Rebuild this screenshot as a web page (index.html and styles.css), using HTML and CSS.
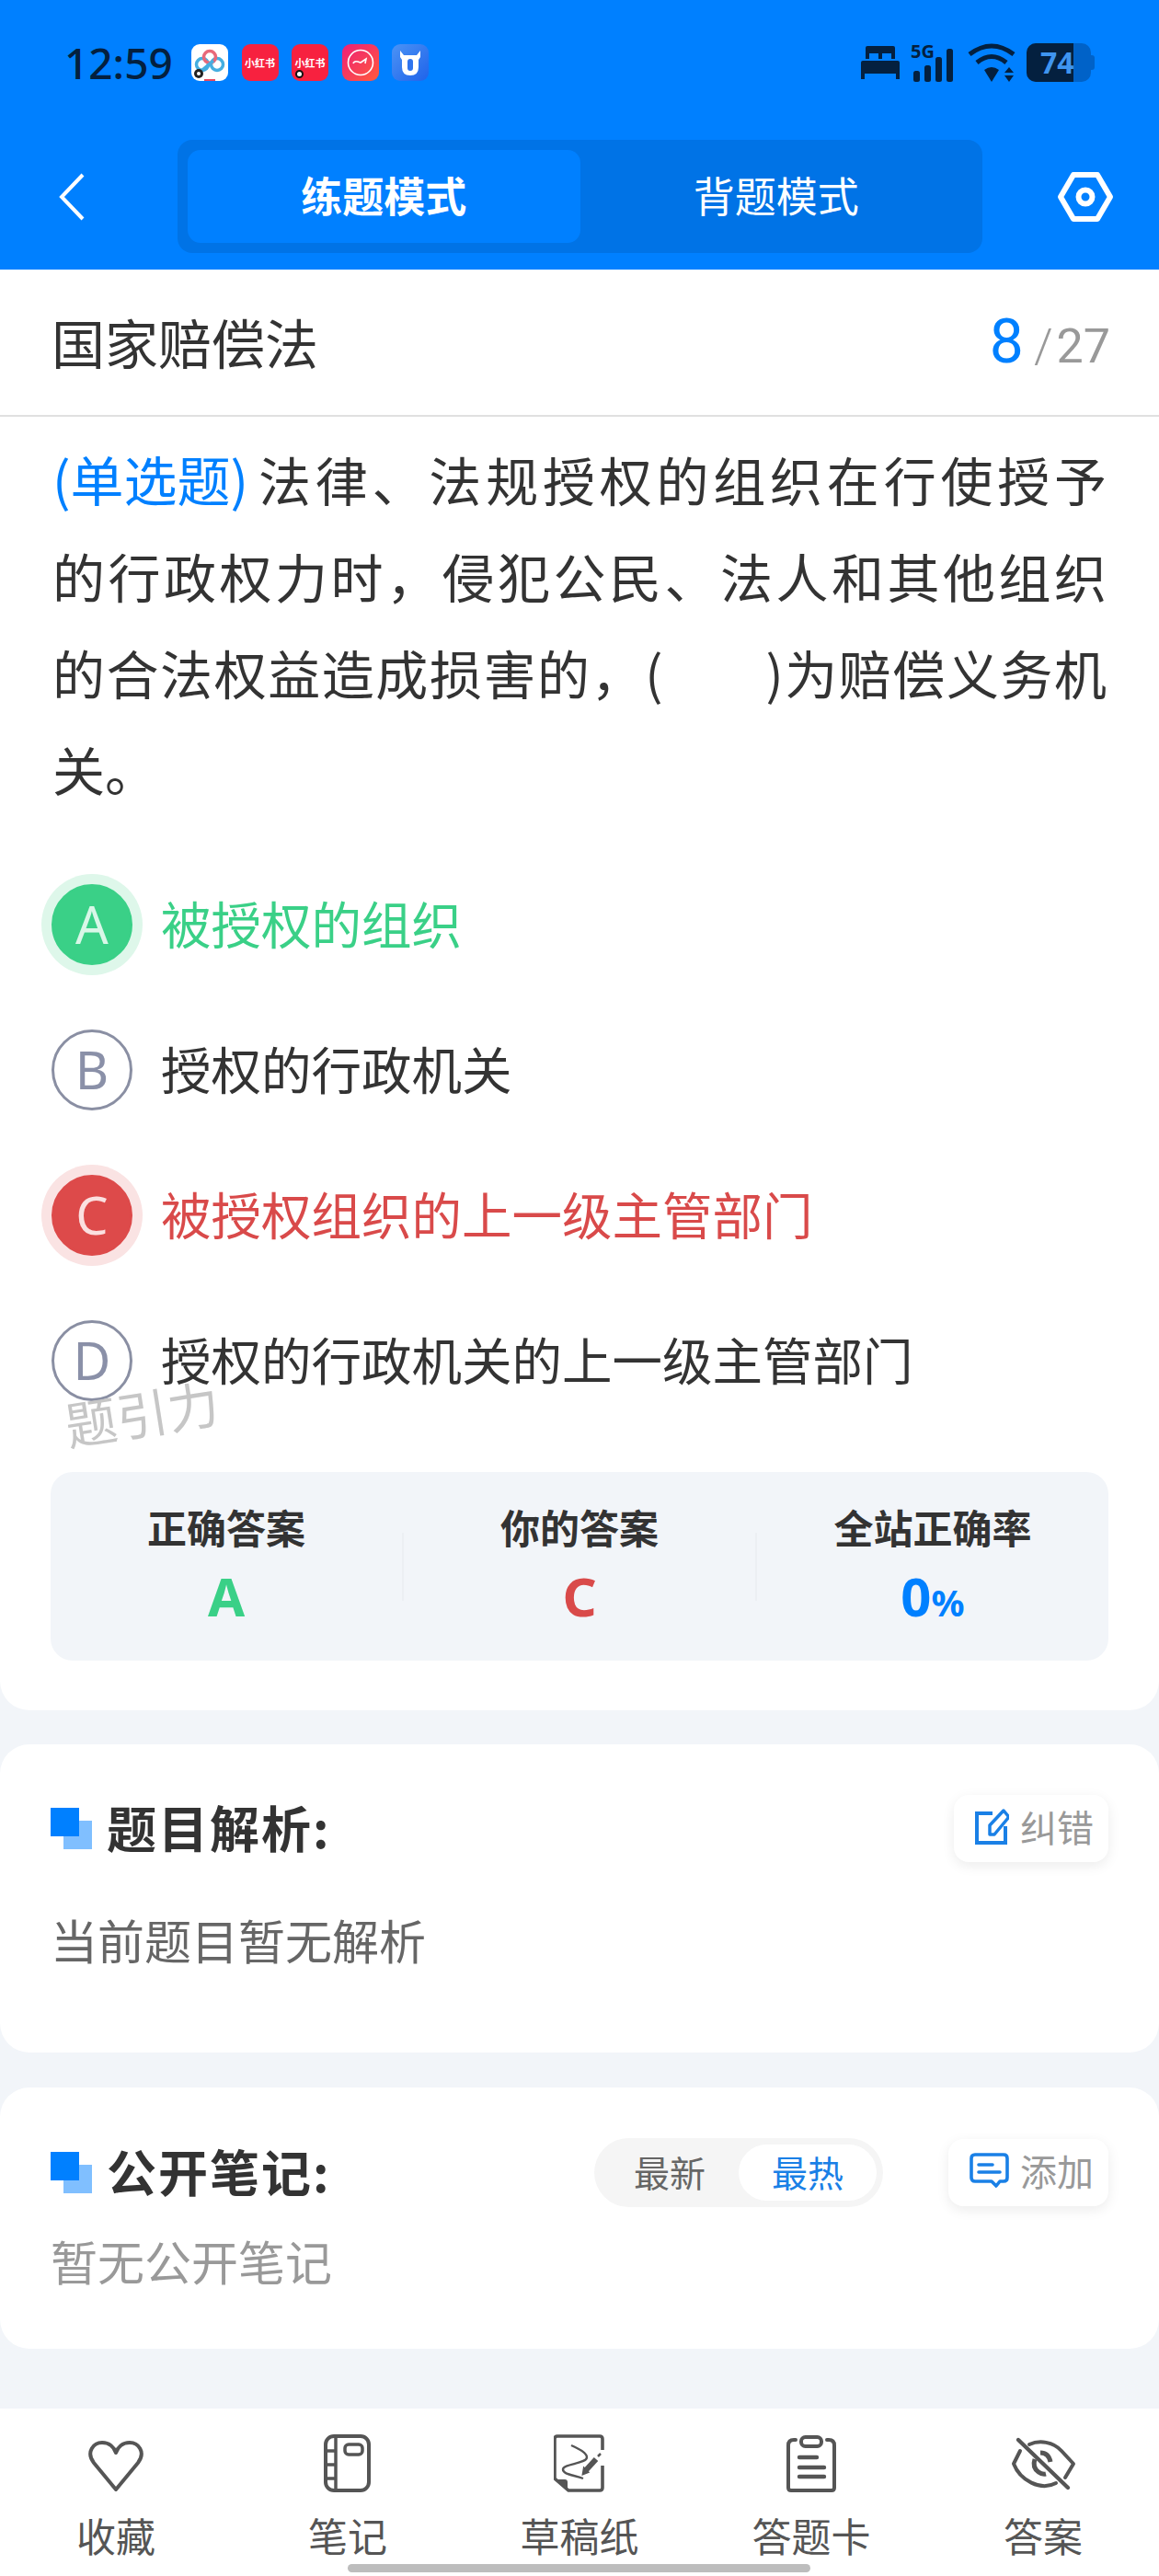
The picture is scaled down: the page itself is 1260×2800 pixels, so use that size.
FILE: index.html
```html
<!DOCTYPE html>
<html lang="zh-CN">
<head>
    <meta charset="UTF-8">
    <meta name="viewport" content="width=device-width, initial-scale=1.0">
    <title>练题模式</title>
    <link rel="stylesheet" href="styles.css">
</head>
<body>
<div class="app">

    <header class="top">
        <div class="status">
            <span class="time">12:59</span>
            <div class="notif">
                <svg class="app-icon" viewBox="0 0 40 40">
                    <rect width="40" height="40" rx="9" fill="#fff"/>
                    <circle cx="12" cy="22" r="6.5" fill="none" stroke="#45aee0" stroke-width="3.5"/>
                    <circle cx="28" cy="22" r="6.5" fill="none" stroke="#45aee0" stroke-width="3.5"/>
                    <circle cx="20" cy="14" r="6.5" fill="none" stroke="#e8697a" stroke-width="3.5"/>
                    <path d="M12 28L24 18" stroke="#45aee0" stroke-width="3.5"/>
                    <circle cx="8" cy="32" r="5" fill="#222"/><circle cx="8" cy="32" r="2" fill="#fff"/>
                    <rect x="14" y="38" width="12" height="2" fill="#e8495f"/>
                </svg>
                <span class="app-icon red">小红书</span>
                <span class="app-icon red dot">小红书</span>
                <svg class="app-icon" viewBox="0 0 40 40">
                    <defs><linearGradient id="pk" x1="0" y1="0" x2="1" y2="1"><stop offset="0" stop-color="#ee1f78"/><stop offset="1" stop-color="#ff5a3c"/></linearGradient></defs>
                    <rect width="40" height="40" rx="9" fill="url(#pk)"/>
                    <circle cx="20" cy="20" r="13.5" fill="none" stroke="#fff" stroke-width="1.6"/>
                    <path d="M12 21Q13 18 17 19L20 20L26 16L25 21" fill="none" stroke="#fff" stroke-width="1.6"/>
                </svg>
                <svg class="app-icon" viewBox="0 0 40 40">
                    <defs><linearGradient id="bl" x1="0" y1="0" x2="1" y2="1"><stop offset="0" stop-color="#4b93f5"/><stop offset="1" stop-color="#1f63ea"/></linearGradient></defs>
                    <rect width="40" height="40" rx="9" fill="url(#bl)"/>
                    <path d="M9 7L13 12H27L31 7V14L29 17V25Q29 34 20 34Q11 34 11 25V17L9 14Z" fill="#fff"/>
                    <rect x="17" y="16" width="6" height="13" rx="3" fill="#2f74ee"/>
                </svg>
            </div>
            <div class="sys">
                <svg class="bed" width="42" height="36" viewBox="0 0 42 36">
                    <path d="M5 2Q5 0 7 0H35Q37 0 37 2V14H33V8H23V14H19V8H9V14H5Z M0 18Q0 16 2 16H40Q42 16 42 18V36H38V30H4V36H0Z" fill="#04203f"/>
                </svg>
                <div class="signal">
                    <span class="five-g">5G</span>
                    <svg width="50" height="42" viewBox="0 0 50 42">
                        <rect x="3" y="30" width="7" height="12" rx="2.5" fill="#04203f"/>
                        <rect x="15" y="24" width="7" height="18" rx="2.5" fill="#04203f"/>
                        <rect x="27" y="15" width="7" height="27" rx="2.5" fill="#04203f"/>
                        <rect x="39" y="6" width="7" height="36" rx="2.5" fill="#04203f"/>
                    </svg>
                </div>
                <svg class="wifi" width="54" height="42" viewBox="0 0 54 42">
                    <g fill="none" stroke="#04203f" stroke-width="5">
                        <path d="M2 12Q26 -6 50 12"/>
                        <path d="M10 21Q26 8 42 21"/>
                    </g>
                    <path d="M18 29Q26 23 34 29L26 42Z" fill="#04203f"/>
                    <path d="M45 26L50 32H40Z M40 35H50L45 42Z" fill="#04203f"/>
                </svg>
                <div class="battery"><span class="battery-fill">74</span></div>
            </div>
        </div>
        <nav class="nav">
            <svg class="back" width="28" height="52" viewBox="0 0 28 52">
                <path d="M26 2L3 26L26 50" fill="none" stroke="#fff" stroke-width="4"/>
            </svg>
            <div class="mode-tabs">
                <div class="mode-tab active">练题模式</div>
                <div class="mode-tab">背题模式</div>
            </div>
            <svg class="settings" width="62" height="54" viewBox="0 0 62 54">
                <path d="M18 3H44L58 27L44 51H18L4 27Z" fill="none" stroke="#fff" stroke-width="6" stroke-linejoin="round"/>
                <circle cx="31" cy="27" r="7.5" fill="none" stroke="#fff" stroke-width="6"/>
            </svg>
        </nav>
    </header>

    <main class="content">
        <section class="card question-card">
            <div class="title-row">
                <span class="title">国家赔偿法</span>
                <span class="count"><b>8</b><i>/</i>27</span>
            </div>
            <div class="question">
                <span class="q-line"><span class="q-type">(单选题)</span>法律、法规授权的组织在行使授予</span>
                <span class="q-line">的行政权力时，侵犯公民、法人和其他组织</span>
                <span class="q-line">的合法权益造成损害的，(<span class="blank"></span>)为赔偿义务机</span>
                <span class="q-line last">关。</span>
            </div>
            <div class="options">
                <div class="option right"><span class="letter">A</span><span class="opt-text">被授权的组织</span></div>
                <div class="option"><span class="letter">B</span><span class="opt-text">授权的行政机关</span></div>
                <div class="option wrong"><span class="letter">C</span><span class="opt-text">被授权组织的上一级主管部门</span></div>
                <div class="option"><span class="letter">D</span><span class="opt-text">授权的行政机关的上一级主管部门</span></div>
                <span class="watermark">题引力</span>
            </div>
            <div class="stats">
                <div class="stat"><div class="stat-label">正确答案</div><div class="stat-value green">A</div></div>
                <span class="stat-line"></span>
                <div class="stat"><div class="stat-label">你的答案</div><div class="stat-value red-text">C</div></div>
                <span class="stat-line"></span>
                <div class="stat"><div class="stat-label">全站正确率</div><div class="stat-value blue">0<small>%</small></div></div>
            </div>
        </section>

        <section class="card analysis-card">
            <div class="section-head">
                <span class="mark"></span>
                <h3>题目解析:</h3>
                <div class="small-btn">
                    <svg width="37" height="40" viewBox="0 0 37 40">
                        <path d="M19 6H2V38H33V20" fill="none" stroke="#1a80e6" stroke-width="4"/>
                        <path d="M16 29V19L31 3L36 9V11L21 29Z" fill="none" stroke="#1a80e6" stroke-width="3.5" stroke-linejoin="round"/>
                    </svg>
                    纠错
                </div>
            </div>
            <p class="analysis-text">当前题目暂无解析</p>
        </section>

        <section class="card notes-card">
            <div class="section-head">
                <span class="mark"></span>
                <h3>公开笔记:</h3>
                <div class="sort">
                    <span class="sort-item">最新</span>
                    <span class="sort-item active">最热</span>
                </div>
                <div class="small-btn">
                    <svg width="43" height="38" viewBox="0 0 43 38">
                        <path d="M6 2H37Q41 2 41 6V27Q41 31 37 31H33L29 36L24 31H6Q2 31 2 27V6Q2 2 6 2Z" fill="none" stroke="#1a80e6" stroke-width="3.6" stroke-linejoin="round"/>
                        <path d="M10 13H25M10 21H33" stroke="#1a80e6" stroke-width="3.6" stroke-linecap="round"/>
                    </svg>
                    添加
                </div>
            </div>
            <p class="notes-text">暂无公开笔记</p>
        </section>
    </main>

    <footer class="tabbar">
        <div class="tab-item">
            <svg width="64" height="64" viewBox="0 0 64 64">
                <path d="M32 60L8 31C-1 19 8 9 17 9C25 9 30 14 32 20C34 14 39 9 47 9C56 9 65 19 56 31Z" fill="none" stroke="#555" stroke-width="4" stroke-linejoin="round"/>
            </svg>
            <span>收藏</span>
        </div>
        <div class="tab-item">
            <svg width="52" height="64" viewBox="0 0 52 64">
                <rect x="2" y="2" width="47" height="59" rx="9" fill="none" stroke="#555" stroke-width="4"/>
                <path d="M13 2V61M2 18H13M2 33H13M2 48H13" stroke="#555" stroke-width="3.5"/>
                <rect x="23" y="11" width="19" height="11" rx="4" fill="none" stroke="#555" stroke-width="3.5"/>
            </svg>
            <span>笔记</span>
        </div>
        <div class="tab-item">
            <svg width="56" height="64" viewBox="14 8 56 64">
                <path d="M67 25V13Q67 10 64 10H18Q15 10 15 13V56L30 69H64Q67 69 67 66V42" fill="none" stroke="#555" stroke-width="3.6"/>
                <path d="M15 57H26Q29 57 29 60V69Z" fill="#555"/>
                <path d="M33 20C42 24 50 28 50 33C50 40 24 40 24 46C24 52 36 52 46 56" fill="none" stroke="#555" stroke-width="2.4"/>
                <path d="M49 47L60 35" stroke="#555" stroke-width="6"/>
                <path d="M46 51L47 45L51 49Z M62 32L65 29" fill="#555" stroke="#555" stroke-width="2.5"/>
            </svg>
            <span>草稿纸</span>
        </div>
        <div class="tab-item">
            <svg width="54" height="64" viewBox="0 0 54 64">
                <path d="M10 6H8Q2 6 2 12V58Q2 61 5 61H49Q52 61 52 58V12Q52 6 46 6H44" fill="none" stroke="#555" stroke-width="4" stroke-linecap="round"/>
                <rect x="16" y="3" width="22" height="10" rx="4.5" fill="none" stroke="#555" stroke-width="4"/>
                <path d="M14 25H33M14 36H41M14 46H41" stroke="#555" stroke-width="4.4" stroke-linecap="round"/>
            </svg>
            <span>答题卡</span>
        </div>
        <div class="tab-item">
            <svg width="72" height="64" viewBox="0 0 72 64">
                <path d="M21 11C32 6 47 8 56 18L69 32L60 47M11 18L4 32C11 50 33 62 50 53" fill="none" stroke="#555" stroke-width="4" stroke-linecap="round" stroke-linejoin="round"/>
                <path d="M9 6L63 58" stroke="#555" stroke-width="4.4" stroke-linecap="round"/>
                <path d="M27 27Q24 36 31 41Q35 44 39 43M33 20Q42 20 44 30" fill="none" stroke="#555" stroke-width="5"/>
            </svg>
            <span>答案</span>
        </div>
        <span class="home-bar"></span>
    </footer>

</div>
</body>
</html>
```

FILE: styles.css
```css
/* General Reset */
* {
    margin: 0;
    padding: 0;
    box-sizing: border-box;
}

body {
    font-family: "Noto Sans CJK SC", "Noto Sans", sans-serif;
    background-color: #f2f5f9;
    color: #333;
}

.app {
    width: 1260px;
    height: 2800px;
    display: flex;
    flex-direction: column;
}

/* Blue header */
.top {
    background-color: #0080ff;
    height: 293px;
}

.status {
    height: 136px;
    padding: 0 70px;
    display: flex;
    align-items: center;
}

.time {
    font-family: "Noto Sans", sans-serif;
    font-size: 46px;
    font-weight: 500;
    color: #04203f;
    width: 138px;
}

.notif {
    display: flex;
    gap: 14.5px;
}

.app-icon {
    width: 40px;
    height: 40px;
    display: block;
}

.app-icon.red {
    background-color: #f7213f;
    border-radius: 9px;
    color: #fff;
    font-size: 11px;
    font-weight: 700;
    line-height: 40px;
    text-align: center;
    white-space: nowrap;
    position: relative;
}

.app-icon.dot::after {
    content: "";
    position: absolute;
    left: 4px;
    bottom: 3px;
    width: 5px;
    height: 5px;
    border: 2.5px solid #111;
    border-radius: 50%;
    background-color: #fff;
    box-sizing: content-box;
}

.sys {
    margin-left: auto;
    display: flex;
    align-items: center;
}

.bed {
    margin-right: 12px;
}

.signal {
    width: 50px;
    height: 42px;
    margin-right: 12px;
    position: relative;
}

.signal svg {
    display: block;
}

.five-g {
    position: absolute;
    left: 0;
    top: 1px;
    font-family: "Noto Sans", sans-serif;
    font-size: 20px;
    font-weight: 700;
    line-height: 16px;
    color: #04203f;
}

.wifi {
    margin-right: 10px;
}

.battery {
    width: 70px;
    height: 42px;
    margin-right: 4px;
    background-color: #0062c8;
    border-radius: 10px;
    position: relative;
}

.battery::after {
    content: "";
    position: absolute;
    right: -4px;
    top: 13px;
    width: 4px;
    height: 16px;
    background-color: #0062c8;
    border-radius: 0 3px 3px 0;
}

.battery-fill {
    display: block;
    width: 51px;
    height: 42px;
    padding-left: 15px;
    background-color: #04203f;
    border-radius: 10px 0 0 10px;
    color: #3f95f0;
    font-family: "Noto Sans", sans-serif;
    font-size: 32px;
    font-weight: 700;
    line-height: 42px;
    white-space: nowrap;
}

.nav {
    margin-top: 16px;
    padding-left: 64px;
    display: flex;
    align-items: center;
}

.back {
    margin-right: 101px;
}

.mode-tabs {
    width: 875px;
    height: 123px;
    padding: 11px;
    margin-right: 81px;
    background-color: #0073e6;
    border-radius: 16px;
    display: flex;
}

.mode-tab {
    flex: 1;
    border-radius: 14px;
    color: #fff;
    font-size: 45px;
    line-height: 97px;
    text-align: center;
}

.mode-tab.active {
    background-color: #0080ff;
    font-weight: 700;
}

/* Cards */
.content {
    flex: 1;
}

.card {
    background-color: #fff;
    border-radius: 32px;
}

.question-card {
    height: 1566px;
    border-radius: 0 0 32px 32px;
}

.title-row {
    height: 160px;
    padding: 0 53px 2px 56px;
    border-bottom: 2px solid #e0e0e0;
    display: flex;
    align-items: center;
    justify-content: space-between;
}

.title {
    font-size: 58px;
}

.count {
    font-family: "Roboto", sans-serif;
    font-size: 52px;
    color: #999;
}

.count b {
    font-size: 66px;
    font-weight: 400;
    color: #0080ff;
}

.count i {
    margin: 0 4px 0 11px;
    font-style: normal;
    font-weight: 300;
}

.question {
    padding: 15px 57px 0;
    font-size: 57px;
    line-height: 105px;
}

.q-line {
    display: block;
    text-align: justify;
    text-align-last: justify;
    white-space: nowrap;
}

.q-line.last {
    text-align-last: left;
}

.q-type {
    display: inline-block;
    margin-right: 6px;
    font-size: 58px;
    color: #0080ff;
}

.blank {
    display: inline-block;
    width: 112px;
}

.options {
    margin-top: 38px;
    padding-left: 56px;
    position: relative;
}

.option {
    height: 158px;
    display: flex;
    align-items: center;
    font-size: 54.5px;
}

.opt-text {
    margin: 0 0 6px -1px;
}

.letter {
    width: 88px;
    height: 88px;
    margin-right: 32px;
    border: 3px solid #8a8fa3;
    border-radius: 50%;
    color: #8a90a8;
    font-family: "Noto Sans", sans-serif;
    font-size: 56px;
    font-weight: 400;
    line-height: 80px;
    text-align: center;
}

.option.right {
    color: #3ad087;
}

.option.right .letter {
    background-color: #3ad087;
    border-color: #3ad087;
    color: #d9f7e8;
    box-shadow: 0 0 0 11px #def7ea;
}

.option.wrong {
    color: #d94a4a;
}

.option.wrong .letter {
    background-color: #dd4a4a;
    border-color: #dd4a4a;
    color: #fbe0e0;
    box-shadow: 0 0 0 11px #fae3e3;
}

.watermark {
    position: absolute;
    left: 70px;
    top: 568px;
    font-size: 56px;
    font-weight: 400;
    color: #c6c6c6;
    transform: rotate(-9deg);
}

.stats {
    width: 1150px;
    height: 205px;
    margin: 42px 0 0 55px;
    padding-top: 33px;
    background-color: #f2f5f9;
    border-radius: 24px;
    display: flex;
}

.stat {
    flex: 1;
    text-align: center;
}

.stat-line {
    width: 2px;
    height: 74px;
    margin-top: 33px;
    background-color: #eceff3;
}

.stat-label {
    font-size: 43px;
    font-weight: 700;
    line-height: 52px;
}

.stat-value {
    margin-top: 20px;
    font-family: "Noto Sans", sans-serif;
    font-size: 58px;
    font-weight: 700;
    line-height: 60px;
}

.stat-value small {
    font-size: 40px;
}

.green {
    color: #3ad087;
}

.red-text {
    color: #d94a4a;
}

.blue {
    color: #0080ff;
}

.analysis-card {
    height: 335px;
    margin-top: 37px;
    padding: 55px 55px 0;
}

.notes-card {
    height: 284px;
    margin-top: 38px;
    padding: 56px 55px 0;
}

.section-head {
    height: 73px;
    display: flex;
    align-items: center;
}

.mark {
    width: 31px;
    height: 31px;
    margin: 0 30px 14px 0;
    background-color: #0080ff;
    box-shadow: 14px 14px 0 #80bfff;
}

.section-head h3 {
    flex: 1;
    margin-bottom: 4px;
    font-size: 54px;
    font-weight: 700;
    letter-spacing: 2px;
}

.small-btn {
    height: 73px;
    padding: 0 16px 5px 23px;
    background-color: #fff;
    border-radius: 16px;
    box-shadow: 0 4px 14px rgba(0, 0, 0, 0.08);
    color: #999;
    font-size: 40px;
    display: flex;
    align-items: center;
    gap: 12px;
}

.sort {
    width: 314px;
    height: 75px;
    margin-right: 71px;
    padding: 7px;
    background-color: #f5f5f5;
    border-radius: 38px;
    display: flex;
}

.sort-item {
    flex: 1;
    border-radius: 31px;
    color: #666;
    font-size: 39px;
    line-height: 58px;
    text-align: center;
}

.sort-item.active {
    flex: none;
    width: 150px;
    background-color: #fff;
    color: #1a80e6;
}

.analysis-text {
    margin-top: 49px;
    font-size: 51px;
    line-height: 70px;
    color: #666;
}

.notes-text {
    margin-top: 24px;
    font-size: 51px;
    line-height: 70px;
    color: #999;
}

/* Bottom bar */
.tabbar {
    height: 182px;
    padding-top: 28px;
    background-color: #fff;
    display: flex;
    position: relative;
}

.tab-item {
    flex: 1;
    display: flex;
    flex-direction: column;
    align-items: center;
    color: #555;
    font-size: 43px;
    line-height: 56px;
}

.tab-item svg {
    display: block;
    margin-bottom: 17px;
}

.home-bar {
    position: absolute;
    left: 378px;
    bottom: 4px;
    width: 503px;
    height: 9px;
    background-color: #bdbdbd;
    border-radius: 5px;
}
```
